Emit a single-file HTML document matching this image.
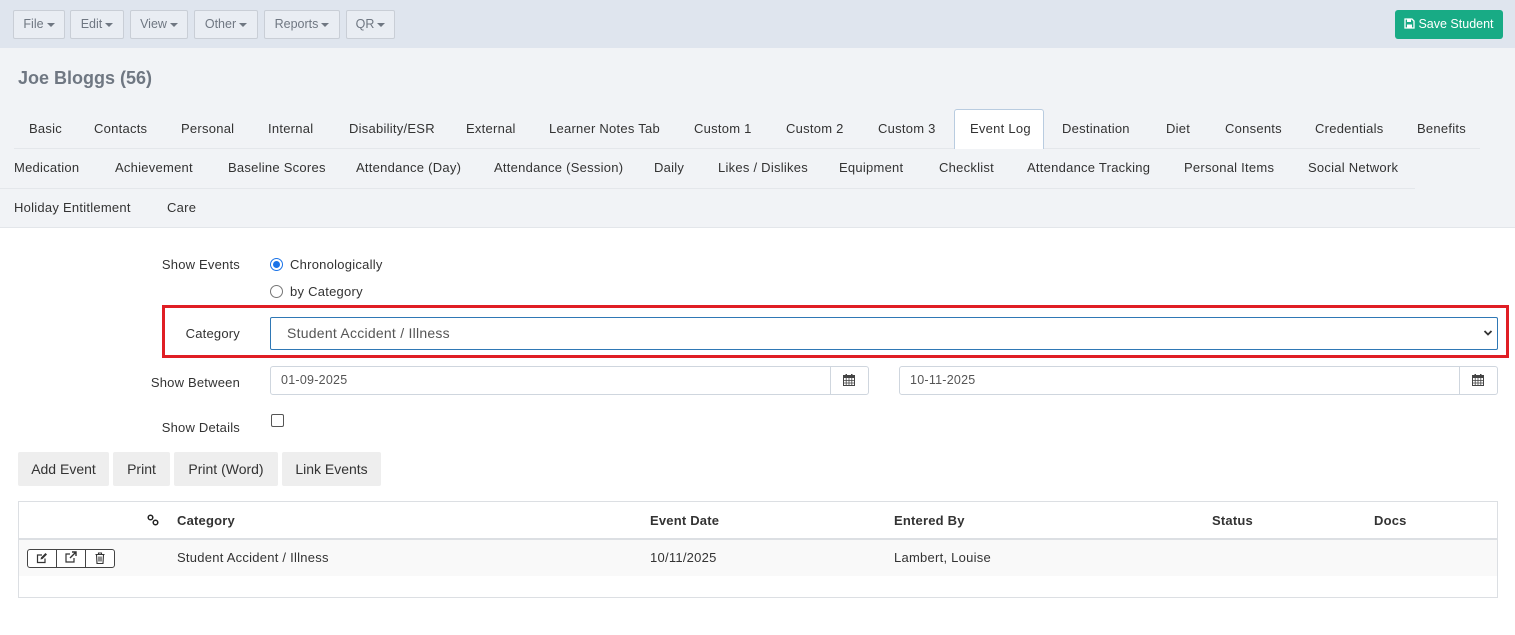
<!DOCTYPE html>
<html><head><meta charset="utf-8"><style>
*{box-sizing:border-box;margin:0;padding:0}
body{width:1515px;height:635px;position:relative;background:#fff;font-family:"Liberation Sans",sans-serif;font-size:13px;color:#333;overflow:hidden}
.a{position:absolute;white-space:nowrap}
.top{position:absolute;left:0;top:0;width:1515px;height:48px;background:#dfe5ee}
.hdr{position:absolute;left:0;top:48px;width:1515px;height:180px;background:#f1f3f6;border-bottom:1px solid #e3e6ea}
.mb{position:absolute;top:10px;height:29px;border:1px solid #c9ced6;background:#e9edf3;color:#6f7782;font-size:12.5px;text-align:center;line-height:27px;border-radius:2px}
.car{display:inline-block;width:0;height:0;border-left:4px solid transparent;border-right:4px solid transparent;border-top:4px solid #6f7782;vertical-align:middle;margin-left:3px}
.t{position:absolute;font-size:13px;color:#333;white-space:nowrap;letter-spacing:0.25px}
.tl{position:absolute;height:1px;background:#e4e7eb}
.lbl{position:absolute;right:1275px;font-size:13px;color:#333;white-space:nowrap;letter-spacing:0.2px}
.inp{position:absolute;border:1px solid #cfd6de;border-radius:3px;background:#fff;height:29px}
.btn{position:absolute;top:452px;height:34px;background:#eeeeee;font-size:14px;line-height:34px;text-align:center;color:#333;border-radius:2px}
.th{position:absolute;top:513px;font-weight:bold;font-size:13px;color:#333;letter-spacing:0.2px}
</style></head><body>
<div class="top"></div>
<div class="mb" style="left:13px;width:52px">File<span class="car"></span></div>
<div class="mb" style="left:70px;width:54px">Edit<span class="car"></span></div>
<div class="mb" style="left:130px;width:58px">View<span class="car"></span></div>
<div class="mb" style="left:194px;width:64px">Other<span class="car"></span></div>
<div class="mb" style="left:264px;width:76px">Reports<span class="car"></span></div>
<div class="mb" style="left:346px;width:49px">QR<span class="car"></span></div>
<div class="a" style="left:1395px;top:10px;width:108px;height:29px;background:#18ab85;border-radius:3px;color:#fff;font-size:12.5px;line-height:29px;text-align:center"><svg width="11" height="11" viewBox="0 0 11 11" style="vertical-align:-1px;margin-right:3px"><path d="M1 1h7l2 2v7H1z" fill="none" stroke="#fff" stroke-width="1.3"/><rect x="3" y="1.5" width="4" height="2.5" fill="#fff"/><rect x="3" y="6.5" width="5" height="3" fill="#fff"/></svg>Save Student</div>
<div class="hdr"></div>
<div class="a" style="left:18px;top:68px;font-size:18px;font-weight:bold;color:#6f7782">Joe Bloggs (56)</div>

<div class="a" style="left:954px;top:109px;width:90px;height:40px;background:#fff;border:1px solid #b9cce0;border-bottom:none;border-radius:3px 3px 0 0"></div>
<div class="tl" style="left:14px;top:148px;width:940px"></div>
<div class="tl" style="left:1044px;top:148px;width:436px"></div>
<div class="tl" style="left:0;top:188px;width:1415px"></div>

<div class="t" style="left:29px;top:121px">Basic</div>
<div class="t" style="left:94px;top:121px">Contacts</div>
<div class="t" style="left:181px;top:121px">Personal</div>
<div class="t" style="left:268px;top:121px">Internal</div>
<div class="t" style="left:349px;top:121px">Disability/ESR</div>
<div class="t" style="left:466px;top:121px">External</div>
<div class="t" style="left:549px;top:121px">Learner Notes Tab</div>
<div class="t" style="left:694px;top:121px">Custom 1</div>
<div class="t" style="left:786px;top:121px">Custom 2</div>
<div class="t" style="left:878px;top:121px">Custom 3</div>
<div class="t" style="left:970px;top:121px">Event Log</div>
<div class="t" style="left:1062px;top:121px">Destination</div>
<div class="t" style="left:1166px;top:121px">Diet</div>
<div class="t" style="left:1225px;top:121px">Consents</div>
<div class="t" style="left:1315px;top:121px">Credentials</div>
<div class="t" style="left:1417px;top:121px">Benefits</div>

<div class="t" style="left:14px;top:160px">Medication</div>
<div class="t" style="left:115px;top:160px">Achievement</div>
<div class="t" style="left:228px;top:160px">Baseline Scores</div>
<div class="t" style="left:356px;top:160px">Attendance (Day)</div>
<div class="t" style="left:494px;top:160px">Attendance (Session)</div>
<div class="t" style="left:654px;top:160px">Daily</div>
<div class="t" style="left:718px;top:160px">Likes / Dislikes</div>
<div class="t" style="left:839px;top:160px">Equipment</div>
<div class="t" style="left:939px;top:160px">Checklist</div>
<div class="t" style="left:1027px;top:160px">Attendance Tracking</div>
<div class="t" style="left:1184px;top:160px">Personal Items</div>
<div class="t" style="left:1308px;top:160px">Social Network</div>

<div class="t" style="left:14px;top:200px">Holiday Entitlement</div>
<div class="t" style="left:167px;top:200px">Care</div>

<div class="lbl" style="top:257px">Show Events</div>
<div class="a" style="left:270px;top:258px;width:13px;height:13px;border-radius:50%;border:1px solid #1a73e8;background:#fff"><div style="position:absolute;left:2px;top:2px;width:7px;height:7px;border-radius:50%;background:#1a73e8"></div></div>
<div class="t" style="left:290px;top:257px">Chronologically</div>
<div class="a" style="left:270px;top:285px;width:13px;height:13px;border-radius:50%;border:1px solid #767676;background:#fff"></div>
<div class="t" style="left:290px;top:284px">by Category</div>

<div class="a" style="left:162px;top:305px;width:1347px;height:53px;border:3px solid #e01e24"></div>
<div class="lbl" style="top:326px">Category</div>
<div class="inp" style="left:270px;top:317px;width:1228px;height:33px;border-color:#2f78b5;border-radius:2px"></div>
<div class="t" style="left:287px;top:325px;font-size:14px;color:#555">Student Accident / Illness</div>
<svg class="a" style="left:1483px;top:329px" width="10" height="8" viewBox="0 0 10 8"><path d="M1.5 2l3.5 3.5L8.5 2" fill="none" stroke="#333" stroke-width="1.8"/></svg>

<div class="lbl" style="top:375px">Show Between</div>
<div class="inp" style="left:270px;top:366px;width:599px"></div>
<div class="a" style="left:830px;top:367px;width:1px;height:27px;background:#cfd6de"></div>
<div class="t" style="left:281px;top:373px;font-size:12.5px;color:#555">01-09-2025</div>
<div class="inp" style="left:899px;top:366px;width:599px"></div>
<div class="a" style="left:1459px;top:367px;width:1px;height:27px;background:#cfd6de"></div>
<div class="t" style="left:910px;top:373px;font-size:12.5px;color:#555">10-11-2025</div>
<svg class="a" style="left:843px;top:374px" width="12" height="12" viewBox="0 0 12 12"><rect x="0.5" y="1.5" width="11" height="10" fill="none" stroke="#444"/><rect x="0.5" y="1.5" width="11" height="2.5" fill="#444"/><path d="M0.5 6.5h11M0.5 9h11M3.2 4v7.5M6 4v7.5M8.8 4v7.5" stroke="#444" stroke-width="0.8"/><rect x="2.5" y="0" width="1.5" height="2.5" fill="#444"/><rect x="8" y="0" width="1.5" height="2.5" fill="#444"/></svg>
<svg class="a" style="left:1472px;top:374px" width="12" height="12" viewBox="0 0 12 12"><rect x="0.5" y="1.5" width="11" height="10" fill="none" stroke="#444"/><rect x="0.5" y="1.5" width="11" height="2.5" fill="#444"/><path d="M0.5 6.5h11M0.5 9h11M3.2 4v7.5M6 4v7.5M8.8 4v7.5" stroke="#444" stroke-width="0.8"/><rect x="2.5" y="0" width="1.5" height="2.5" fill="#444"/><rect x="8" y="0" width="1.5" height="2.5" fill="#444"/></svg>

<div class="lbl" style="top:420px">Show Details</div>
<div class="a" style="left:271px;top:414px;width:13px;height:13px;border:1px solid #555;border-radius:2px;background:#fff"></div>

<div class="btn" style="left:18px;width:91px">Add Event</div>
<div class="btn" style="left:113px;width:57px">Print</div>
<div class="btn" style="left:174px;width:104px">Print (Word)</div>
<div class="btn" style="left:282px;width:99px">Link Events</div>

<div class="a" style="left:18px;top:501px;width:1480px;height:97px;border:1px solid #dcdfe3"></div>
<div class="a" style="left:19px;top:538px;width:1478px;height:2px;background:#dcdfe3"></div>
<div class="a" style="left:19px;top:540px;width:1478px;height:36px;background:#f9f9f9"></div>
<svg class="a" style="left:147px;top:514px" width="12" height="12" viewBox="0 0 12 12"><circle cx="3.5" cy="3.5" r="2.3" fill="none" stroke="#222" stroke-width="1.5"/><circle cx="8.5" cy="8.5" r="2.3" fill="none" stroke="#222" stroke-width="1.5"/></svg>
<div class="th" style="left:177px">Category</div>
<div class="th" style="left:650px">Event Date</div>
<div class="th" style="left:894px">Entered By</div>
<div class="th" style="left:1212px">Status</div>
<div class="th" style="left:1374px">Docs</div>

<div class="a" style="left:27px;top:549px;width:88px;height:19px;border:1px solid #444;border-radius:3px;background:#fff"></div>
<div class="a" style="left:56px;top:550px;width:1px;height:17px;background:#444"></div>
<div class="a" style="left:85px;top:550px;width:1px;height:17px;background:#444"></div>
<svg class="a" style="left:36px;top:552px" width="12" height="12" viewBox="0 0 12 12"><path d="M9 6.5V10.5H1.5V3H6" fill="none" stroke="#333" stroke-width="1.2"/><path d="M4.5 7.5l0.5-2 4.5-4.5 1.5 1.5-4.5 4.5z" fill="#333"/></svg>
<svg class="a" style="left:65px;top:551px" width="12" height="12" viewBox="0 0 12 12"><path d="M9 7V11H1V3H5" fill="none" stroke="#333" stroke-width="1.2"/><path d="M5 7L10.5 1.5M7 1h4v4" fill="none" stroke="#333" stroke-width="1.4"/></svg>
<svg class="a" style="left:95px;top:552px" width="10" height="12" viewBox="0 0 10 12"><path d="M0.5 2.5h9M3.5 2.5V1h3v1.5M1.5 2.5l.5 9h6l.5-9M4 4.5v5M6 4.5v5" fill="none" stroke="#333" stroke-width="1.1"/></svg>
<div class="t" style="left:177px;top:550px">Student Accident / Illness</div>
<div class="t" style="left:650px;top:550px">10/11/2025</div>
<div class="t" style="left:894px;top:550px">Lambert, Louise</div>
</body></html>
